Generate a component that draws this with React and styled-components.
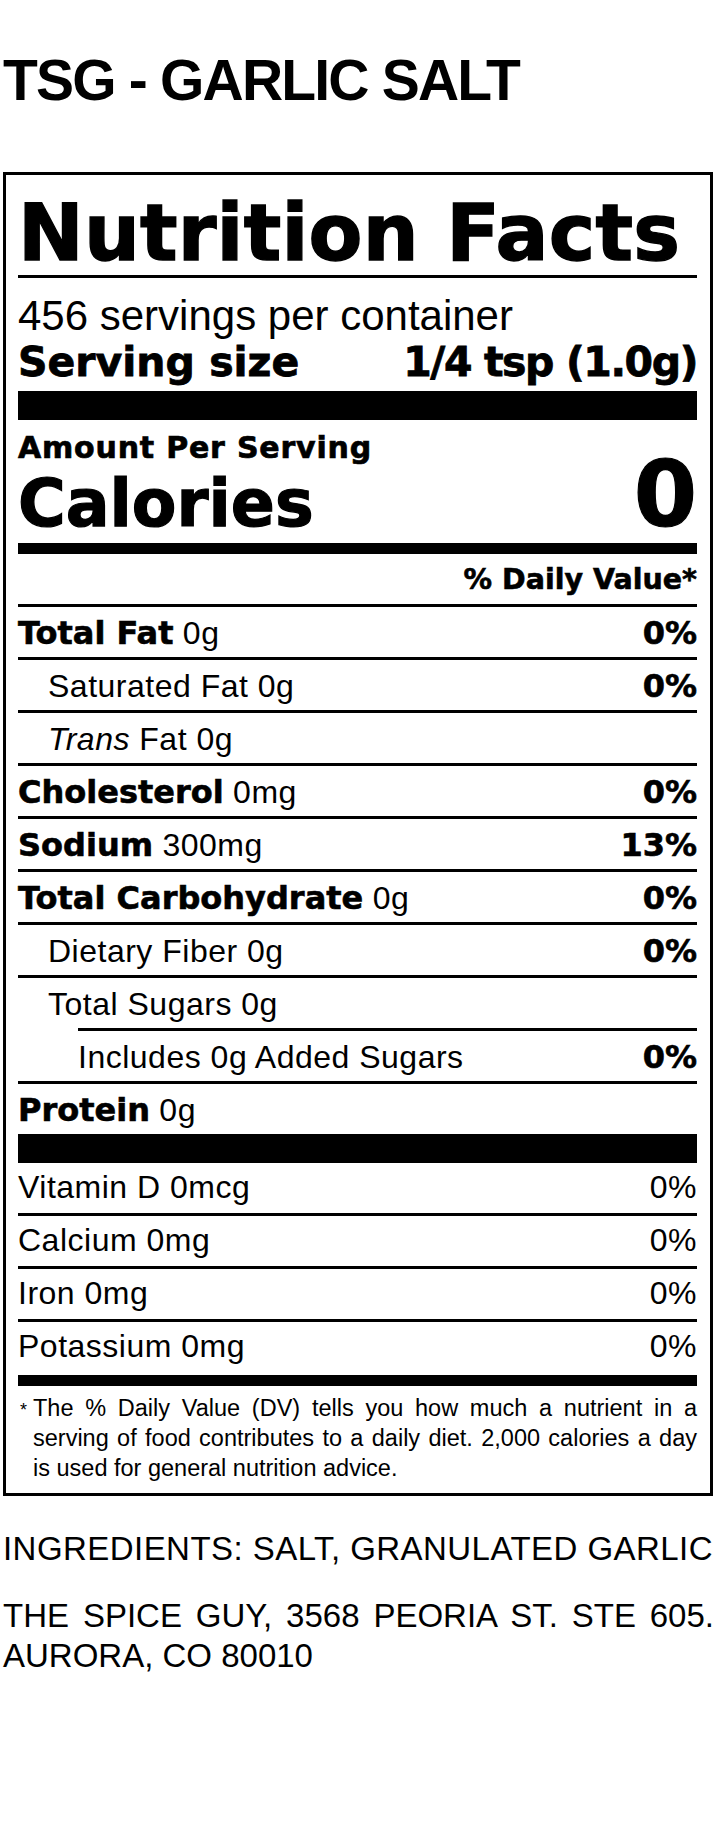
import React, { Component } from "react";
import styled, { createGlobalStyle } from "styled-components";

const GlobalStyle = createGlobalStyle`
	html, body {
		margin: 0;
		padding: 0;
		background: #fff;
		color: #000;
	}
	body {
		font-family: "Liberation Sans", Arial, sans-serif;
	}
`;

const heavy = `"DejaVu Sans", "Liberation Sans", sans-serif`;

const Page = styled.div`
	width: 720px;
	box-sizing: border-box;
	padding: 48px 6px 0 3px;
`;

const Title = styled.h1`
	margin: 0;
	font-family: "Liberation Sans", Arial, sans-serif;
	font-weight: 700;
	font-size: 57px;
	line-height: 64px;
	letter-spacing: -1.8px;
`;

const Label = styled.section`
	box-sizing: border-box;
	width: 710px;
	margin-top: 60px;
	border: 3px solid #000;
	padding: 16px 13px 10px 12px;
`;

const Heading = styled.h2`
	margin: 0;
	font-family: ${heavy};
	font-weight: 700;
	font-size: 78.5px;
	line-height: 84px;
	white-space: nowrap;
	letter-spacing: 0.2px;
	-webkit-text-stroke: 1.4px #000;
`;

const Rule = styled.div`
	height: ${p => p.$h}px;
	margin-top: ${p => p.$mt || 0}px;
	background: #000;
`;

const Servings = styled.div`
	margin-top: 14px;
	font-size: 42px;
	line-height: 47px;
`;

const SplitLine = styled.div`
	display: flex;
	justify-content: space-between;
	align-items: baseline;
	font-family: ${heavy};
	font-weight: 700;
	font-size: 41px;
	line-height: 47px;
	-webkit-text-stroke: 0.8px #000;
`;

const ServingValue = styled.span`
	letter-spacing: -1.4px;
`;

const AmountLabel = styled.div`
	margin-top: 11px;
	font-family: ${heavy};
	font-weight: 700;
	font-size: 30px;
	line-height: 34px;
	letter-spacing: 0.8px;
	-webkit-text-stroke: 0.7px #000;
`;

const CaloriesRow = styled.div`
	display: flex;
	justify-content: space-between;
	align-items: baseline;
	font-family: ${heavy};
	font-weight: 700;
	-webkit-text-stroke: 1.2px #000;
`;

const CaloriesWord = styled.span`
	font-size: 65px;
	line-height: 68px;
`;

const CaloriesValue = styled.span`
	font-size: 91px;
	line-height: 60px;
`;

const DailyHead = styled.div`
	margin-top: 10px;
	text-align: right;
	font-family: ${heavy};
	font-weight: 700;
	font-size: 28.5px;
	line-height: 32px;
	-webkit-text-stroke: 0.6px #000;
`;

const Rows = styled.div`
	margin-top: 8px;
`;

const NutrientRow = styled.div`
	display: flex;
	justify-content: space-between;
	align-items: baseline;
	border-top: 3px solid #000;
	margin-left: ${p => p.$lineIndent || 0}px;
	padding: 3px 0 1px ${p => p.$indent || 0}px;
	font-size: 32px;
	line-height: 46px;
	letter-spacing: 0.5px;
	white-space: nowrap;
`;

const VitaminRow = styled.div`
	display: flex;
	justify-content: space-between;
	align-items: baseline;
	border-bottom: ${p => (p.$last ? "none" : "3px solid #000")};
	padding: 1px 0 ${p => (p.$last ? 6 : 3)}px 0;
	font-size: 32px;
	line-height: 46px;
	letter-spacing: 0.5px;
`;

const Bold = styled.span`
	font-family: ${heavy};
	font-weight: 700;
	letter-spacing: 0;
	-webkit-text-stroke: 0.6px #000;
`;

const Italic = styled.em`
	font-style: italic;
`;

const Footnote = styled.div`
	display: flex;
	align-items: baseline;
	margin-top: 7px;
	padding-left: 2px;
`;

const Star = styled.span`
	width: 13px;
	flex: none;
	font-size: 18px;
	line-height: 30px;
`;

const FootText = styled.div`
	flex: 1;
	font-size: 23.5px;
	line-height: 30px;
`;

const Line = styled.div`
	white-space: nowrap;
	text-align: ${p => (p.$justify ? "justify" : "left")};
	text-align-last: ${p => (p.$justify ? "justify" : "auto")};
`;

const Ingredients = styled.p`
	margin: 33px 0 0;
	font-size: 33px;
	line-height: 40px;
	letter-spacing: 0.45px;
	white-space: nowrap;
`;

const Address = styled.div`
	margin-top: 27px;
	font-size: 33px;
	line-height: 40px;
`;

const nutrients = [
	{ name: "Total Fat", amount: "0g", dv: "0%", bold: true },
	{ name: "Saturated Fat", amount: "0g", dv: "0%", indent: 30 },
	{ name: "Fat", amount: "0g", italic: "Trans", indent: 30 },
	{ name: "Cholesterol", amount: "0mg", dv: "0%", bold: true },
	{ name: "Sodium", amount: "300mg", dv: "13%", bold: true },
	{ name: "Total Carbohydrate", amount: "0g", dv: "0%", bold: true },
	{ name: "Dietary Fiber", amount: "0g", dv: "0%", indent: 30 },
	{ name: "Total Sugars", amount: "0g", indent: 30 },
	{ name: "Includes 0g Added Sugars", dv: "0%", lineIndent: 60 },
	{ name: "Protein", amount: "0g", bold: true }
];

const vitamins = [
	{ name: "Vitamin D 0mcg", dv: "0%" },
	{ name: "Calcium 0mg", dv: "0%" },
	{ name: "Iron 0mg", dv: "0%" },
	{ name: "Potassium 0mg", dv: "0%" }
];

class App extends Component {
	render() {
		return (
			<Page>
				<GlobalStyle />
				<Title>TSG - GARLIC SALT</Title>
				<Label>
					<Heading>Nutrition Facts</Heading>
					<Rule $h={3} />
					<Servings>456 servings per container</Servings>
					<SplitLine>
						<span>Serving size</span>
						<ServingValue>1/4 tsp (1.0g)</ServingValue>
					</SplitLine>
					<Rule $h={29} $mt={5} />
					<AmountLabel>Amount Per Serving</AmountLabel>
					<CaloriesRow>
						<CaloriesWord>Calories</CaloriesWord>
						<CaloriesValue>0</CaloriesValue>
					</CaloriesRow>
					<Rule $h={11} $mt={5} />
					<DailyHead>% Daily Value*</DailyHead>
					<Rows>
						{nutrients.map(n => (
							<NutrientRow
								key={n.name}
								$indent={n.indent}
								$lineIndent={n.lineIndent}
							>
								<span>
									{n.italic && <Italic>{n.italic} </Italic>}
									{n.bold ? <Bold>{n.name}</Bold> : n.name}
									{n.amount && " " + n.amount}
								</span>
								{n.dv && <Bold>{n.dv}</Bold>}
							</NutrientRow>
						))}
					</Rows>
					<Rule $h={29} />
					{vitamins.map((v, i) => (
						<VitaminRow key={v.name} $last={i === vitamins.length - 1}>
							<span>{v.name}</span>
							<span>{v.dv}</span>
						</VitaminRow>
					))}
					<Rule $h={11} />
					<Footnote>
						<Star>*</Star>
						<FootText>
							<Line $justify>
								The % Daily Value (DV) tells you how much a nutrient in a
							</Line>
							<Line $justify>
								serving of food contributes to a daily diet. 2,000 calories a day
							</Line>
							<Line>is used for general nutrition advice.</Line>
						</FootText>
					</Footnote>
				</Label>
				<Ingredients>INGREDIENTS: SALT, GRANULATED GARLIC</Ingredients>
				<Address>
					<Line $justify>THE SPICE GUY, 3568 PEORIA ST. STE 605.</Line>
					<Line>AURORA, CO 80010</Line>
				</Address>
			</Page>
		);
	}
}

export default App;
